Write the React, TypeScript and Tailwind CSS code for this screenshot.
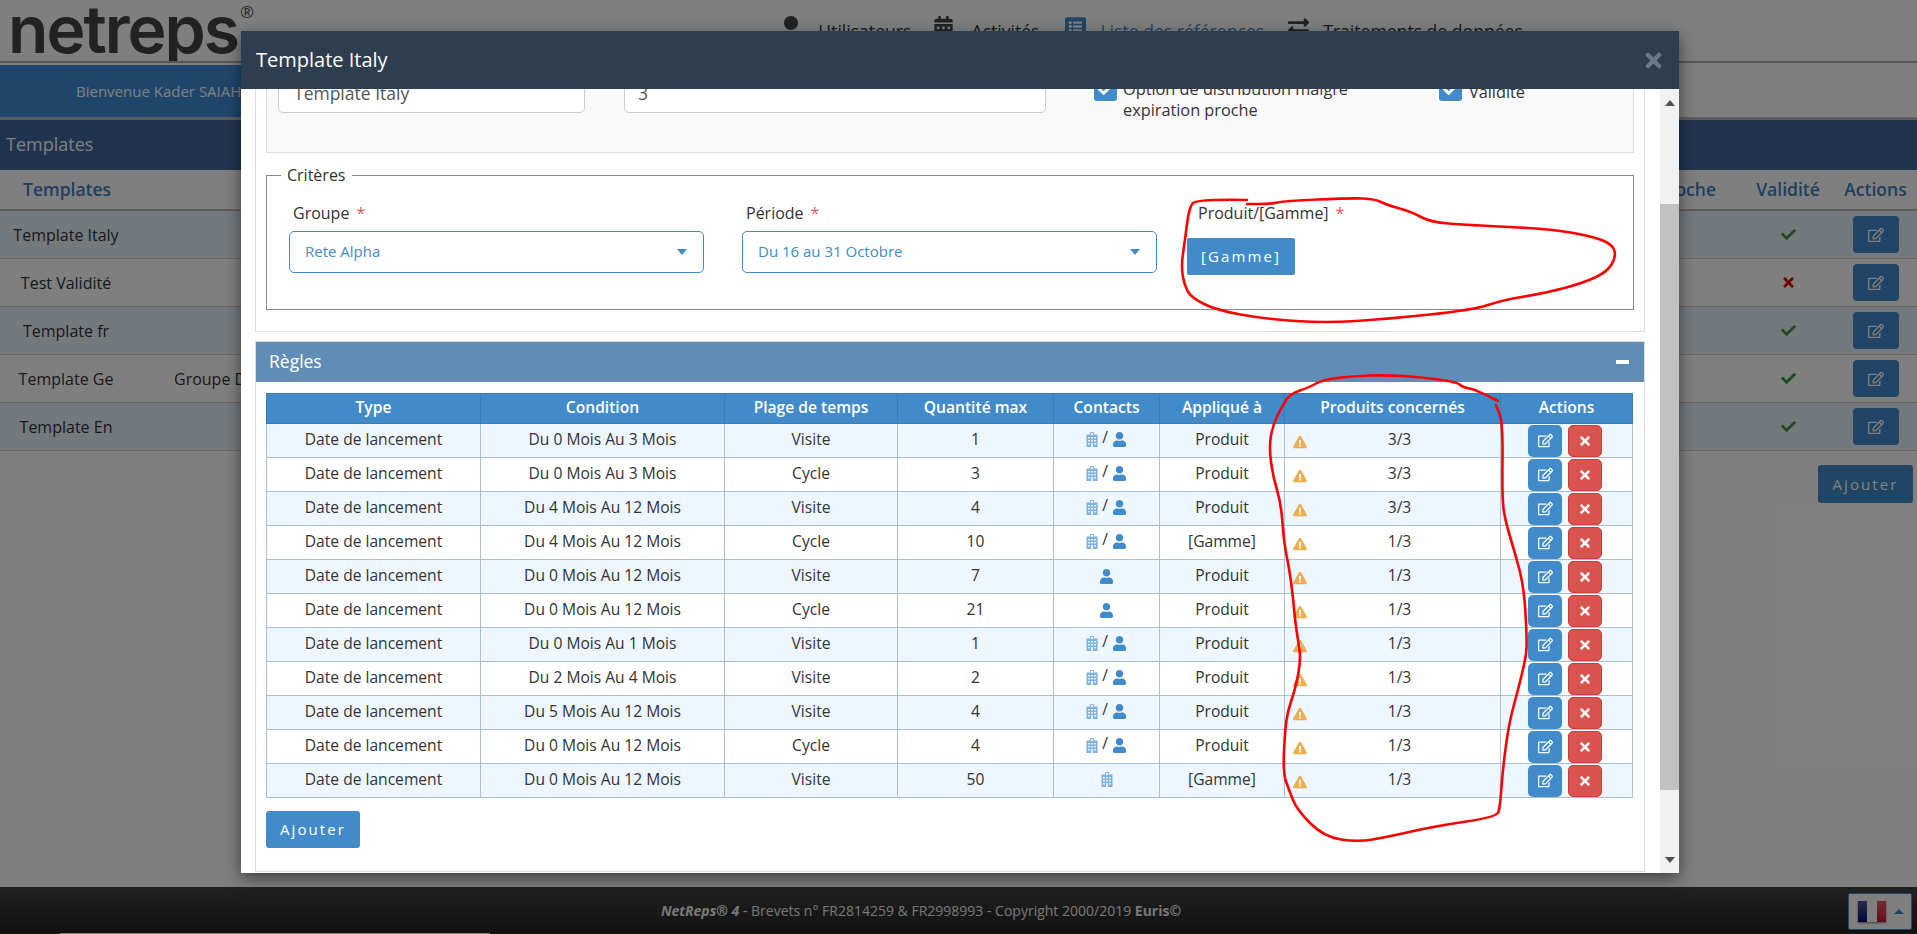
import type { ReactNode } from "react";
import { FaCalendarAlt, FaCheck, FaExchangeAlt, FaExclamationTriangle, FaListAlt, FaRegEdit, FaTimes, FaUser } from "react-icons/fa";

const font = { fontFamily: '"Open Sans", sans-serif' };

const templates = [
  { name: "Template Italy", group: "", ok: true },
  { name: "Test Validité", group: "", ok: false },
  { name: "Template fr", group: "", ok: true },
  { name: "Template Ge", group: "Groupe Démo", ok: true },
  { name: "Template En", group: "", ok: true },
];

const rules = [
  ["Du 0 Mois Au 3 Mois", "Visite", "1", "both", "Produit", "3/3"],
  ["Du 0 Mois Au 3 Mois", "Cycle", "3", "both", "Produit", "3/3"],
  ["Du 4 Mois Au 12 Mois", "Visite", "4", "both", "Produit", "3/3"],
  ["Du 4 Mois Au 12 Mois", "Cycle", "10", "both", "[Gamme]", "1/3"],
  ["Du 0 Mois Au 12 Mois", "Visite", "7", "user", "Produit", "1/3"],
  ["Du 0 Mois Au 12 Mois", "Cycle", "21", "user", "Produit", "1/3"],
  ["Du 0 Mois Au 1 Mois", "Visite", "1", "both", "Produit", "1/3"],
  ["Du 2 Mois Au 4 Mois", "Visite", "2", "both", "Produit", "1/3"],
  ["Du 5 Mois Au 12 Mois", "Visite", "4", "both", "Produit", "1/3"],
  ["Du 0 Mois Au 12 Mois", "Cycle", "4", "both", "Produit", "1/3"],
  ["Du 0 Mois Au 12 Mois", "Visite", "50", "site", "[Gamme]", "1/3"],
];

const heads = ["Type", "Condition", "Plage de temps", "Quantité max", "Contacts", "Appliqué à", "Produits concernés", "Actions"];

const loopTop: number[][] = [
  [1247, 200], [1196, 199], [1189, 208], [1185, 240], [1181, 267], [1185, 287], [1192, 298], [1216, 310], [1265, 319], [1326, 323],
  [1387, 319], [1473, 310], [1503, 300], [1546, 293], [1583, 283], [1607, 272], [1616, 257], [1613, 245], [1595, 237], [1552, 229],
  [1467, 225], [1430, 222], [1412, 212], [1387, 205], [1375, 199], [1351, 198], [1284, 201], [1271, 204], [1247, 204],
];

const loopBottom: number[][] = [
  [1498, 401], [1477, 390], [1462, 387], [1457, 382], [1420, 377], [1387, 375], [1353, 376], [1322, 380], [1310, 387], [1290, 394],
  [1283, 405], [1273, 424], [1269, 447], [1273, 477], [1281, 503], [1284, 543], [1289, 567], [1293, 597], [1295, 620], [1298, 640],
  [1301, 660], [1295, 690], [1288, 710], [1285, 730], [1283, 773], [1289, 790], [1297, 810], [1324, 837], [1358, 842], [1387, 837],
  [1436, 826], [1497, 817], [1500, 807], [1503, 767], [1509, 723], [1518, 690], [1526, 657], [1527, 640], [1524, 587], [1515, 553],
  [1505, 520], [1502, 497], [1503, 423], [1496, 405],
];

// smooth line through the traced points
const toPath = (pts: number[][]) => {
  let d = `M${pts[0][0]} ${pts[0][1]}`;
  for (let i = 1; i < pts.length - 1; i++) {
    const mx = (pts[i][0] + pts[i + 1][0]) / 2;
    const my = (pts[i][1] + pts[i + 1][1]) / 2;
    d += ` Q${pts[i][0]} ${pts[i][1]} ${mx} ${my}`;
  }
  const last = pts[pts.length - 1];
  return `${d} L${last[0]} ${last[1]}`;
};

const Building = () => (
  <svg width="12" height="15" viewBox="0 0 12 15" className="shrink-0">
    <path d="M4 0h4v2.5h3.5V15H.5V2.5H4z" fill="#7fb0e0" />
    <path d="M5.4.8h1.2v.7h.7v1H6.6v.8H5.400v-.8h-.7v-1h.7z" fill="#fff" />
    <path d="M2 5h2v1.500H2zM5 5h2v1.500H5zM8 5h2v1.500H8zM2 8h2v1.500H2zM5 8h2v1.500H5zM8 8h2v1.500H8zM2 11h2v1.500H2zM8 11h2v1.500H8zM5 11h2v4H5z" fill="#e8f2fc" />
  </svg>
);

const Contacts = ({ kind }: { kind: string }) => (
  <div className="flex items-center justify-center gap-[4px] text-[#333]">
    {kind !== "user" && <Building />}
    {kind === "both" && <span className="-mt-[3px]">/</span>}
    {kind !== "site" && <FaUser className="text-[#428bca] mt-[1px]" size={15} />}
  </div>
);

const Required = ({ children, className }: { children: ReactNode; className: string }) => (
  <div className={`h-[22px] text-[16px] leading-[22px] font-medium text-[#333] ${className}`}>
    {children}
    <span className="ml-[7px] text-[#e25a5a] font-normal">*</span>
  </div>
);

const Select = ({ value }: { value: string }) => (
  <div className="flex items-center justify-between w-[415px] h-[42px] mt-[7px] pl-[15px] pr-[15px] pb-[2px] border border-[#428bca] rounded-[5px] text-[15px] text-[#428bca]">
    <span>{value}</span>
    <span className="mr-[1px] mt-[2px] w-0 h-0 border-x-[5px] border-x-transparent border-t-[6px] border-t-[#428bca]" />
  </div>
);

const Check = () => (
  <div className="flex items-center justify-center shrink-0 w-[23px] h-[24px] mt-[2px] rounded-[3px] bg-[#428bca]">
    <FaCheck className="text-white" size={15} />
  </div>
);

const cell = "p-0 pb-[2px] border border-[#a9bfd6]";

export default function App() {
  return (
    <div className="relative flex flex-col w-[1917px] h-[934px] overflow-hidden bg-white text-[#333]" style={font}>
      {/* page behind the dialog */}
      <header className="flex items-start h-[63px] border-b-2 border-[#aaa] overflow-hidden shrink-0">
        <div className="flex items-start w-[288px] pl-[8px] shrink-0">
          <span className="text-[66px] leading-[58px] font-semibold tracking-[-2px] text-[#444]" style={{ fontFamily: "Inter, sans-serif" }}>
            netreps
          </span>
          <span className="mt-[1px] ml-[2px] text-[17px] leading-[22px] text-[#555]">®</span>
        </div>
        <span className="mt-[27px] text-[18px] font-semibold leading-[24px] text-[#555]">ADMIN</span>
        <nav className="flex items-start ml-[428px] text-[17.6px]">
          <div className="flex items-start">
            <FaUser size={28} className="mt-[16px] text-[#444]" />
            <span className="ml-[13px] mt-[18px]">Utilisateurs</span>
          </div>
          <div className="flex items-start ml-[22px]">
            <FaCalendarAlt size={21} className="mt-[16px] text-[#444]" />
            <span className="ml-[17px] mt-[18px]">Activités</span>
          </div>
          <div className="flex items-start ml-[26px] text-[#428bca]">
            <FaListAlt size={21} className="mt-[16px]" />
            <span className="ml-[14px] mt-[18px]">Liste des références</span>
          </div>
          <div className="flex items-start ml-[24px]">
            <FaExchangeAlt size={21} className="mt-[16px] text-[#444]" />
            <span className="ml-[14px] mt-[18px]">Traitements de données</span>
          </div>
        </nav>
      </header>

      <div className="flex h-[55px] mt-[2px] border-b-[3px] border-[#bbb] shrink-0">
        <div className="flex items-center w-[500px] pl-[76px] bg-[#3f8ed6] text-[15px] text-white">Bienvenue Kader SAIAH</div>
      </div>

      <div className="flex items-center h-[50px] pl-[6px] pb-[2px] bg-[#40689e] text-[18px] text-white shrink-0">Templates</div>

      <div className="grid grid-cols-[132px_1fr_96px_81px] items-center h-[41px] border-b-2 border-[#bbb] text-[17.5px] font-semibold text-[#3f7fbd] shrink-0">
        <span className="pl-[23px]">Templates</span>
        <span className="pr-[24px] text-right">Expiration proche</span>
        <span className="text-center">Validité</span>
        <span className="text-center pr-[2px]">Actions</span>
      </div>

      {templates.map((t, i) => (
        <div key={t.name} className={`grid grid-cols-[132px_1fr_96px_81px] items-center h-[48px] border-b border-[#ccc] text-[16px] shrink-0 ${i % 2 === 0 ? "bg-[#e9f2fb]" : "bg-white"}`}>
          <span className="text-center">{t.name}</span>
          <span className="pl-[42px]">{t.group}</span>
          <span className="flex justify-center">
            {t.ok ? <FaCheck size={15} className="text-[#3c9a3c]" /> : <FaTimes size={15} className="text-[#d00]" />}
          </span>
          <span className="flex justify-center pr-[2px]">
            <span className="flex items-center justify-center w-[46px] h-[37px] rounded-[4px] bg-[#428bca]">
              <FaRegEdit size={16} className="text-white" />
            </span>
          </span>
        </div>
      ))}

      <div className="flex justify-end mt-[14px] pr-[4px]">
        <button className="w-[95px] h-[38px] rounded-[3px] bg-[#428bca] text-[15px] tracking-[0.14em] text-white">Ajouter</button>
      </div>

      <footer className="relative flex items-center justify-center mt-auto h-[46px] pr-[75px] bg-gradient-to-b from-[#444] to-[#222] text-[14px] text-[#eee] shrink-0">
        <span>
          <b className="italic font-bold">NetReps® 4</b> - Brevets n° FR2814259 &amp; FR2998993 - Copyright 2000/2019 <b className="font-bold">Euris©</b>
        </span>
        <div className="absolute right-[5px] top-[6px] flex items-center w-[64px] h-[37px] pl-[9px] bg-white border border-[#428bca] rounded-[2px]">
          <div className="flex w-[28px] h-[21px] shadow-[0_1px_2px_rgba(0,0,0,.5)]">
            <span className="flex-1 bg-gradient-to-b from-[#55559a] to-[#00007a]" />
            <span className="flex-1 bg-white" />
            <span className="flex-1 bg-gradient-to-b from-[#e05a6a] to-[#c8102e]" />
          </div>
          <span className="ml-[8px] w-0 h-0 border-x-[5px] border-x-transparent border-b-[5px] border-b-[#428bca]" />
        </div>
      </footer>
      <div className="flex h-px shrink-0 bg-[#333]">
        <span className="ml-[60px] w-[430px] bg-white" />
      </div>

      <div className="absolute inset-0 bg-black/50" />

      {/* dialog */}
      <div className="absolute left-[241px] top-[31px] flex flex-col w-[1438px] h-[842px] bg-white shadow-[0_5px_15px_rgba(0,0,0,.5)]">
        <div className="flex items-center justify-between h-[58px] pl-[15px] pr-[14px] bg-[#2c3e50] text-white shrink-0">
          <span className="text-[20px]">Template Italy</span>
          <FaTimes size={23} className="text-[#6a7887]" />
        </div>

        <div className="flex flex-1 min-h-0">
          <div className="flex-1 min-w-0 pl-[14px] pr-[15px] overflow-hidden">
            <div className="h-[243px] px-[10px] border-x border-b border-[#ddd]">
              <div className="h-[64px] overflow-hidden bg-[#f9f9f9] border-x border-b border-[#ddd]">
                <div className="flex items-start -mt-[14px] pl-[11px] text-[16.3px]">
                  <div className="flex items-center w-[307px] h-[38px] pl-[15px] pb-[2px] border border-[#ccc] rounded-[5px] bg-white text-[17.5px] text-[#555] shrink-0">Template Italy</div>
                  <div className="flex items-center w-[422px] h-[38px] ml-[39px] pl-[13px] pb-[2px] border border-[#ccc] rounded-[5px] bg-white text-[17.5px] text-[#555] shrink-0">3</div>
                  <div className="ml-[48px]">
                    <Check />
                  </div>
                  <div className="w-[316px] ml-[6px] mt-[4px] pr-[60px] leading-[21px]">Option de distribution malgré expiration proche</div>
                  <Check />
                  <span className="ml-[7px] mt-[7px] leading-[21px]">Validité</span>
                </div>
              </div>

              <fieldset className="flex h-[147px] mt-[10px] pl-[22px] border border-[#888]">
                <legend className="-ml-[8px] px-[6px] text-[16px] leading-[24px] font-medium">Critères</legend>
                <div className="pt-[15px]">
                  <Required className="pl-[4px]">Groupe</Required>
                  <Select value="Rete Alpha" />
                </div>
                <div className="pt-[15px] ml-[38px]">
                  <Required className="pl-[4px]">Période</Required>
                  <Select value="Du 16 au 31 Octobre" />
                </div>
                <div className="pt-[15px] ml-[30px]">
                  <Required className="pl-[11px]">Produit/[Gamme]</Required>
                  <button className="block w-[108px] h-[37px] mt-[14px] rounded-[2px] bg-[#428bca] text-[15px] tracking-[0.14em] text-white">[Gamme]</button>
                </div>
              </fieldset>
            </div>

            <div className="h-[531px] mt-[9px] border border-[#ddd]">
              <div className="flex items-center justify-between h-[40px] pl-[13px] pr-[15px] pb-[2px] bg-[#5f8db5] text-[17.5px] text-white">
                <span>Règles</span>
                <span className="mt-[2px] w-[13px] h-[4px] bg-white" />
              </div>
              <div className="pt-[11px] pl-[10px]">
                <table className="w-[1366px] table-fixed border-collapse text-center text-[15.6px]">
                  <colgroup>
                    <col className="w-[214px]" />
                    <col className="w-[244px]" />
                    <col className="w-[173px]" />
                    <col className="w-[156px]" />
                    <col className="w-[106px]" />
                    <col className="w-[125px]" />
                    <col className="w-[216px]" />
                    <col className="w-[132px]" />
                  </colgroup>
                  <thead>
                    <tr className="h-[30px] bg-[#428bca] text-white">
                      {heads.map((h) => (
                        <th key={h} className="p-0 pb-[2px] border border-[#3a7cb5] font-semibold">{h}</th>
                      ))}
                    </tr>
                  </thead>
                  <tbody>
                    {rules.map((r, i) => (
                      <tr key={i} className={`h-[34px] ${i % 2 === 0 ? "bg-[#eef7ff]" : "bg-white"}`}>
                        <td className={cell}>Date de lancement</td>
                        <td className={cell}>{r[0]}</td>
                        <td className={cell}>{r[1]}</td>
                        <td className={cell}>{r[2]}</td>
                        <td className={cell}><Contacts kind={r[3]} /></td>
                        <td className={cell}>{r[4]}</td>
                        <td className={cell}>
                          <div className="flex items-center px-[8px]">
                            <FaExclamationTriangle size={14} className="mt-[6px] text-[#f0ad4e] shrink-0" />
                            <span className="flex-1 text-center">{r[5]}</span>
                          </div>
                        </td>
                        <td className="p-0 border border-[#a9bfd6]">
                          <div className="flex gap-[6px] pl-[27px]">
                            <span className="flex items-center justify-center w-[34px] h-[32px] rounded-[5px] bg-[#428bca]">
                              <FaRegEdit size={15} className="text-white" />
                            </span>
                            <span className="flex items-center justify-center w-[34px] h-[32px] rounded-[5px] border border-[#c9403c] bg-[#d9534f]">
                              <FaTimes size={14} className="text-white mt-[1px]" />
                            </span>
                          </div>
                        </td>
                      </tr>
                    ))}
                  </tbody>
                </table>
                <button className="block w-[94px] h-[37px] mt-[13px] rounded-[3px] bg-[#428bca] text-[15px] tracking-[0.14em] text-white">Ajouter</button>
              </div>
            </div>
          </div>

          {/* scrollbar */}
          <div className="flex flex-col items-center w-[19px] bg-[#f1f1f1] shrink-0">
            <span className="mt-[11px] w-0 h-0 border-x-[5px] border-x-transparent border-b-[6px] border-b-[#505050]" />
            <span className="mt-[98px] w-full h-[586px] bg-[#c1c1c1]" />
            <span className="mt-[67px] w-0 h-0 border-x-[5px] border-x-transparent border-t-[6px] border-t-[#505050]" />
          </div>
        </div>
      </div>

      {/* hand-drawn annotations */}
      <svg className="absolute inset-0 pointer-events-none" width="1917" height="934" viewBox="0 0 1917 934" fill="none">
        <path d={toPath(loopTop)} stroke="#f00" strokeWidth="2.6" strokeLinejoin="round" strokeLinecap="round" />
        <path d={toPath(loopBottom)} stroke="#f00" strokeWidth="2.6" strokeLinejoin="round" strokeLinecap="round" />
      </svg>
    </div>
  );
}
